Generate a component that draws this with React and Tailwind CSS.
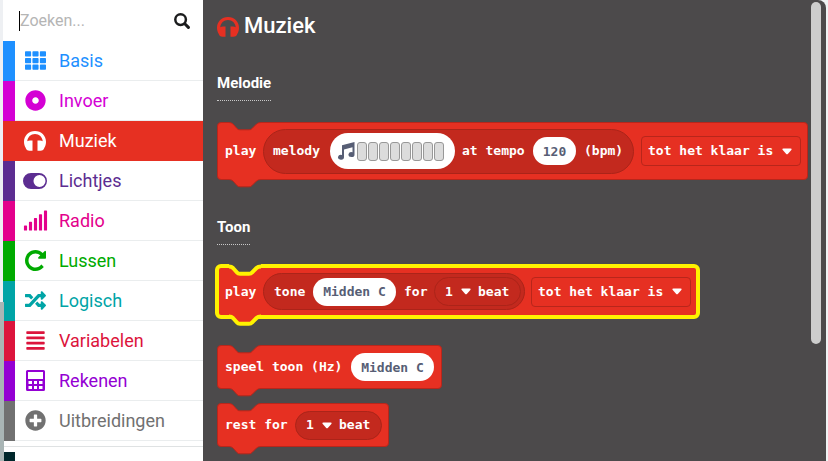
import React from "react";
import {
  FaTh,
  FaDotCircle,
  FaSignal,
  FaRandom,
  FaAlignJustify,
  FaPlusCircle,
} from "react-icons/fa";

function HeadphonesIcon({ className }) {
  return (
    <svg viewBox="0 0 22 20" width="22" height="20" fill="currentColor" className={className} aria-hidden="true">
      <path d="M11 0C4.800 0 0 4.700 0 10.800c0 2.200.500 4 1.500 5.700C2 18.500 3.500 19.800 5.500 19.800H8.500V9.500H6C5 9.500 4 9.800 3.300 10.300C3.500 6.200 6.800 3 11 3s7.500 3.200 7.700 7.300C18 9.800 17 9.500 16 9.500H13.500V19.800h3c2 0 3.500-1.300 4-3.300 1-1.700 1.500-3.500 1.500-5.700C22 4.700 17.200 0 11 0z" />
    </svg>
  );
}

function ToggleIcon() {
  return (
    <svg viewBox="0 0 24 16" width="24" height="16" aria-hidden="true">
      <path
        fill="currentColor"
        fillRule="evenodd"
        d="M8 0h8a8 8 0 0 1 0 16H8A8 8 0 0 1 8 0zM16.500 2a6 6 0 1 0 0 12a6 6 0 1 0 0-12z"
      />
    </svg>
  );
}

function SearchIcon() {
  return (
    <svg viewBox="0 0 16 16" width="16" height="16" fill="none" stroke="currentColor" aria-hidden="true">
      <circle cx="6.600" cy="6.600" r="5.300" strokeWidth="2.500" />
      <path d="M10.800 10.800L14.400 14.400" strokeWidth="3" strokeLinecap="round" />
    </svg>
  );
}

function RepeatIcon() {
  return (
    <svg viewBox="0 0 1536 1536" fill="currentColor" width="21" height="21" aria-hidden="true">
      <path d="M1536 128v448q0 26-19 45t-45 19h-448q-42 0-59-40-17-39 14-69l138-138q-148-137-349-137-104 0-198.500 40.500t-163.500 109.500-109.500 163.500-40.500 198.500 40.500 198.500 109.500 163.500 163.500 109.500 198.500 40.500q119 0 225-52t179-147q7-10 23-12 15 0 25 9l137 138q9 8 9.500 20.500t-7.500 22.500q-109 132-264 204.500t-327 72.500q-156 0-298-61t-245-164-164-245-61-298 61-298 164-245 245-164 298-61q147 0 284.500 55.500t244.500 156.500l130-129q29-31 70-14 39 17 39 59z" />
    </svg>
  );
}

function CalculatorIcon() {
  return (
    <svg viewBox="0 0 19 21" width="19" height="21" aria-hidden="true">
      <path
        fill="currentColor"
        fillRule="evenodd"
        d="M1.500 0h16a1.500 1.500 0 0 1 1.500 1.500v18a1.500 1.500 0 0 1-1.500 1.500H1.500A1.500 1.500 0 0 1 0 19.500V1.500A1.500 1.500 0 0 1 1.500 0zM2 2v7h15v-7zM2.500 11v3h3.500V11zM8 11v3h3V11zM13 11v3h3.500V11zM2.500 16v3h3.500v-3zM8 16v3h3v-3zM13 16v3h3.500v-3z"
      />
    </svg>
  );
}

const categories = [
  { name: "Basis", icon: <FaTh size={21} />, bar: "bg-[#1e90ff]", text: "text-[#1e90ff]" },
  { name: "Invoer", icon: <FaDotCircle size={21} />, bar: "bg-[#d400d4]", text: "text-[#d400d4]" },
  { name: "Muziek", icon: <HeadphonesIcon />, active: true },
  { name: "Lichtjes", icon: <ToggleIcon />, bar: "bg-[#5c2d91]", text: "text-[#5c2d91]" },
  { name: "Radio", icon: <FaSignal size={25} />, bar: "bg-[#e3008c]", text: "text-[#e3008c]" },
  { name: "Lussen", icon: <RepeatIcon />, bar: "bg-[#00aa00]", text: "text-[#00aa00]" },
  { name: "Logisch", icon: <FaRandom size={21} />, bar: "bg-[#00a4a6]", text: "text-[#00a4a6]" },
  { name: "Variabelen", icon: <FaAlignJustify size={21} />, bar: "bg-[#dc143c]", text: "text-[#dc143c]" },
  { name: "Rekenen", icon: <CalculatorIcon />, bar: "bg-[#9400d3]", text: "text-[#9400d3]" },
  { name: "Uitbreidingen", icon: <FaPlusCircle size={21} />, bar: "bg-[#717171]", text: "text-[#717171]" },
];

function Category({ item }) {
  const tone = item.active ? "bg-[#e63022] text-white" : item.text;
  const line = item.active ? "border-[#e63022]" : "border-[#eaedee]";
  return (
    <button type="button" className={`flex h-10 w-full text-left ${tone}`}>
      <span className={`h-full w-3 shrink-0 ${item.bar ?? ""}`} />
      <span className={`flex h-full flex-1 items-center gap-1 border-b ${line}`}>
        <span className="flex w-10 shrink-0 justify-center">{item.icon}</span>
        <span className="text-lg">{item.name}</span>
      </span>
    </button>
  );
}

const NOTCH = "3 3.500Q5.500 3.500 7 5L11 9.500Q12 10.800 14 10.800H23Q25 10.800 26 9.500L30.500 5Q32 3.500 35 3.500";

function Notch({ fill, selected, className }) {
  return (
    <svg className={`absolute left-2 overflow-visible ${className}`} width="38" height="12" viewBox="0 0 38 12" aria-hidden="true">
      <path d={`M3 1L${NOTCH}L35 1Z`} fill={fill} />
      <path d={`M${NOTCH}`} fill="none" stroke={selected ? "#fff200" : "#b8261b"} strokeWidth={selected ? 4 : 1} />
    </svg>
  );
}

function Block({ children, size, selected }) {
  return (
    <div
      className={`relative flex w-max items-center rounded-[4px] border border-[#b8261b] bg-[#e63022] pl-[7px] ${size} ${
        selected ? "outline-4 -outline-offset-2 outline-[#fff200]" : ""
      }`}
    >
      <Notch className="-top-1" fill="#4c4a4b" selected={selected} />
      <Notch className="-bottom-[9px]" fill="#e63022" selected={selected} />
      {children}
    </div>
  );
}

function Caret() {
  return (
    <svg className="shrink-0" width="10" height="7" viewBox="0 0 10 7" aria-hidden="true">
      <path d="M1.500 .5h7Q10 .5 9.500 1.800L6 5.800Q5 6.800 4 5.800L.5 1.800Q0 .5 1.500 .5z" fill="currentColor" />
    </svg>
  );
}

function PlayMode({ id }) {
  return (
    <span className="flex h-[30px] w-40 items-center gap-1 rounded-[4px] border border-[#b8261b] pl-[6px]">
      <select id={id} aria-label="Afspeelmodus" className="w-[130px] appearance-none bg-transparent text-white outline-none">
        <option>tot het klaar is</option>
      </select>
      <Caret />
    </span>
  );
}

function Beat({ id }) {
  return (
    <span className="flex h-[29px] items-center rounded-full border border-[#ab2419] bg-[#c3291e] pr-[10px] pl-[10px]">
      <select id={id} aria-label="Aantal tellen" className="w-4 appearance-none bg-transparent text-white outline-none">
        <option>1</option>
      </select>
      <Caret />
      <label htmlFor={id} className="w-[39px] pl-[7px]">
        beat
      </label>
    </span>
  );
}

function Note({ label }) {
  return (
    <input
      aria-label={label}
      defaultValue="Midden C"
      className="h-7 w-[83px] rounded-full bg-white text-center text-[#575e75] outline-none"
    />
  );
}

function SectionTitle({ children }) {
  return (
    <h3 className="w-max border-b border-dotted border-[#c8c8c8] pb-[7px] text-[15px] leading-5 font-bold text-white">{children}</h3>
  );
}

export default function App() {
  return (
    <div className="flex h-screen overflow-hidden bg-[#f0f3f4] font-[Roboto,sans-serif]">
      <div className="flex w-[3px] shrink-0 flex-col">
        <div className="h-[302px] bg-[#eef0f3]" />
        <div className="z-10 w-1 flex-1 bg-[#a9b5b5]" />
      </div>

      <nav className="w-50 shrink-0 bg-white">
        <div className="flex h-[41px] items-center justify-between pr-[13px] pl-4">
          <input
            aria-label="Zoeken"
            placeholder="Zoeken..."
            className="h-5 w-32 border-l border-black text-base text-black outline-none placeholder:text-[#b5b5b5]"
          />
          <button type="button" aria-label="Zoek" className="text-[#1b1c1d]">
            <SearchIcon />
          </button>
        </div>
        {categories.map((item) => (
          <Category key={item.name} item={item} />
        ))}
        <div className="mt-[5px] mb-[5px] h-px bg-[#dfe2e3]" />
        <div className="h-10 w-3 bg-[#00272b]" />
      </nav>

      <main className="mr-[2px] flex min-w-0 flex-1 justify-between overflow-hidden rounded-tr-lg bg-[#4c4a4b] pr-[5px] pl-[14px]">
        <div className="shrink-0 pt-[11px]">
          <h2 className="flex h-7 items-center gap-[5px] text-[22px] font-medium text-white">
            <HeadphonesIcon className="mt-1 text-[#e63022]" />
            Muziek
          </h2>

          <div className="pt-[34px]">
            <SectionTitle>Melodie</SectionTitle>
          </div>
          <div className="pt-[21px] font-['DejaVu_Sans_Mono','Liberation_Mono',monospace] text-[13px] font-bold text-white">
            <Block size="h-[58px] pr-[6px]">
              <span className="w-[38px]">play</span>
              <span className="mr-[7px] flex h-[45px] items-center rounded-full border border-[#ab2419] bg-[#c3291e] px-[9px]">
                <span className="w-[57px]">melody</span>
                <button type="button" aria-label="Melodie bewerken" className="flex h-9 w-[125px] items-center gap-[2px] rounded-full bg-white pl-[7px]">
                  <svg width="18" height="18" viewBox="0 0 18 18" aria-hidden="true">
                    <path
                      d="M5 3.200L17.500 0V12.500A3 2.500 0 1 1 15.500 10.200V5.200L7 7.400V15.200A3 2.500 0 1 1 5 12.900Z"
                      fill="#575e75"
                    />
                  </svg>
                  <span className="flex gap-px">
                    {[0, 1, 2, 3, 4, 5, 6, 7].map((n) => (
                      <span key={n} className="h-[19px] w-[10px] rounded-[3px] border border-[#989898] bg-[#dcdcdc]" />
                    ))}
                  </span>
                </button>
                <label htmlFor="tempo" className="w-[78px] pl-[7px]">
                  at tempo
                </label>
                <input
                  id="tempo"
                  defaultValue="120"
                  className="h-7 w-[43px] rounded-full bg-white text-center text-[#575e75] outline-none"
                />
                <span className="w-12 pl-2">(bpm)</span>
              </span>
              <PlayMode id="melody-mode" />
            </Block>
          </div>

          <div className="pt-[37px]">
            <SectionTitle>Toon</SectionTitle>
          </div>
          <div className="flex flex-col pt-[21px] font-['DejaVu_Sans_Mono','Liberation_Mono',monospace] text-[13px] font-bold text-white">
            <Block size="h-[51px] pr-[6px]" selected>
              <span className="w-[38px]">play</span>
              <span className="mr-[6px] flex h-[37px] items-center rounded-full border border-[#ab2419] bg-[#c3291e] pr-[3px] pl-[10px]">
                <span className="w-[39px]">tone</span>
                <Note label="Toon" />
                <span className="w-[38px] pl-2">for</span>
                <Beat id="tone-beat" />
              </span>
              <PlayMode id="tone-mode" />
            </Block>
            <div className="pt-7">
              <Block size="h-11 pr-[7px]">
                <span className="w-[126px]">speel toon (Hz)</span>
                <Note label="Toonhoogte" />
              </Block>
            </div>
            <div className="pt-[14px]">
              <Block size="h-11 pr-[6px]">
                <span className="w-[70px]">rest for</span>
                <Beat id="rest-beat" />
              </Block>
            </div>
          </div>
        </div>
        <div className="mt-[2px] h-[342px] w-[10px] shrink-0 rounded-full bg-[#cdcdcd]" />
      </main>
    </div>
  );
}
